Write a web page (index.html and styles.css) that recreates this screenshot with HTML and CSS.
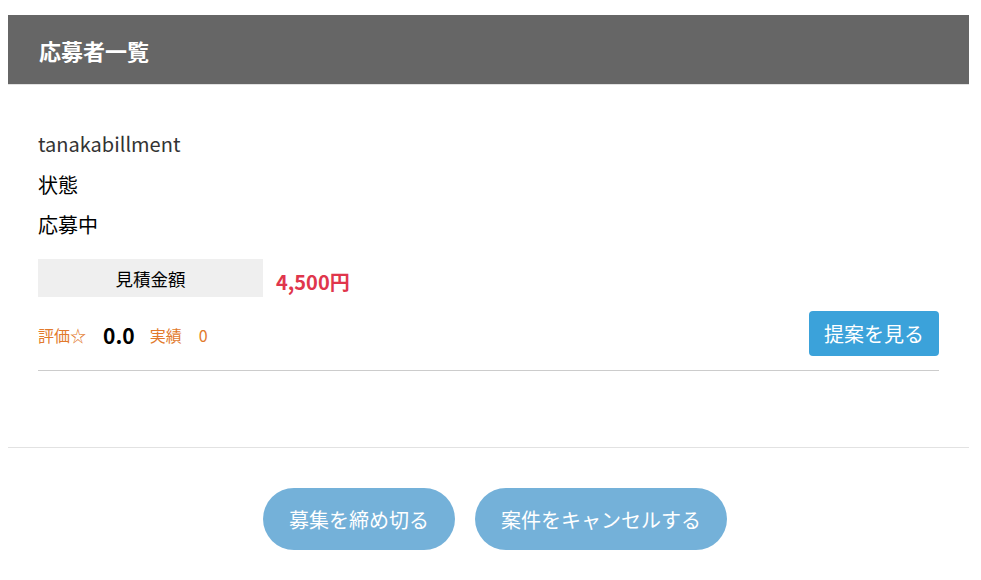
FILE: index.html
```html
<!DOCTYPE html>
<html lang="ja">
<head>
<meta charset="utf-8">
<link rel="stylesheet" href="styles.css">
</head>
<body>
<div class="page">
  <div class="panel-head">
    <h2 class="panel-title">応募者一覧</h2>
  </div>
  <div class="applicants">
    <div class="applicant">
      <p class="line name">tanakabillment</p>
      <p class="line">状態</p>
      <p class="line">応募中</p>
      <div class="estimate">
        <div class="estimate-label">見積金額</div>
        <div class="estimate-value">4,500円</div>
      </div>
      <div class="rating-row">
        <div class="stats">
          <span class="stat-label">評価☆</span>
          <span class="stat-score">0.0</span>
          <span class="stat-label">実績</span>
          <span class="stat-count">0</span>
        </div>
        <button class="btn-proposal">提案を見る</button>
      </div>
    </div>
  </div>
  <div class="actions">
    <button class="btn-pill">募集を締め切る</button>
    <button class="btn-pill">案件をキャンセルする</button>
  </div>
</div>
</body>
</html>
```
FILE: styles.css
```css
* { box-sizing: border-box; }
body {
  margin: 0;
  font-family: "Noto Sans CJK JP", "Noto Sans", sans-serif;
  color: #000;
  background: #fff;
}
.page {
  margin: 15px 12px 0 8px;
}
.panel-head {
  height: 70px;
  background: #666666;
  border-bottom: 1px solid #e2e2e2;
  display: flex;
  align-items: center;
  padding-left: 31px;
}
.panel-title {
  margin: 0;
  color: #fff;
  font-size: 22px;
  font-weight: 700;
  line-height: 1;
  margin-top: 1px;
}
.applicants {
  padding: 40px 30px 76px;
  border-bottom: 1px solid #e2e2e2;
}
.applicant {
  border-bottom: 1px solid #cccccc;
  padding-bottom: 14px;
}
.line {
  margin: 0;
  font-size: 20px;
  line-height: 40px;
  height: 40px;
}
.line.name { color: #333; margin-top: -1px; margin-bottom: 1px; }
.line.last { margin-top: 1px; margin-bottom: -1px; }
.estimate {
  margin-top: 14px;
  display: flex;
  align-items: center;
}
.estimate-label {
  width: 225px;
  height: 38px;
  background: #efefef;
  display: flex;
  align-items: center;
  justify-content: center;
  font-size: 17.5px;
}
.estimate-value {
  margin-left: 13px;
  color: #e0364c;
  font-weight: 700;
  font-size: 20px;
  margin-top: 6px;
}
.rating-row {
  margin-top: 14px;
  display: flex;
  align-items: center;
  justify-content: space-between;
}
.stats {
  display: flex;
  align-items: center;
  margin-top: 2px;
}
.stat-label {
  color: #e27a2c;
  font-size: 16px;
  margin-right: 17px;
}
.stat-score {
  font-size: 21px;
  font-weight: 700;
  margin-right: 15px;
}
.stat-count {
  color: #e27a2c;
  font-size: 16px;
}
.btn-proposal {
  width: 130px;
  height: 45px;
  border: none;
  border-radius: 4px;
  background: #3ba2da;
  color: #fff;
  font-family: inherit;
  font-size: 20px;
  padding: 0;
}
.actions {
  display: flex;
  justify-content: center;
  gap: 20px;
  padding: 40px 0 0 13px;
}
.btn-pill {
  height: 62px;
  border: none;
  border-radius: 31px;
  background: #74b1d9;
  color: #fff;
  font-family: inherit;
  font-size: 20px;
  padding: 0;
}
.btn-pill:first-child { width: 192px; }
.btn-pill:last-child { width: 252px; }
```
